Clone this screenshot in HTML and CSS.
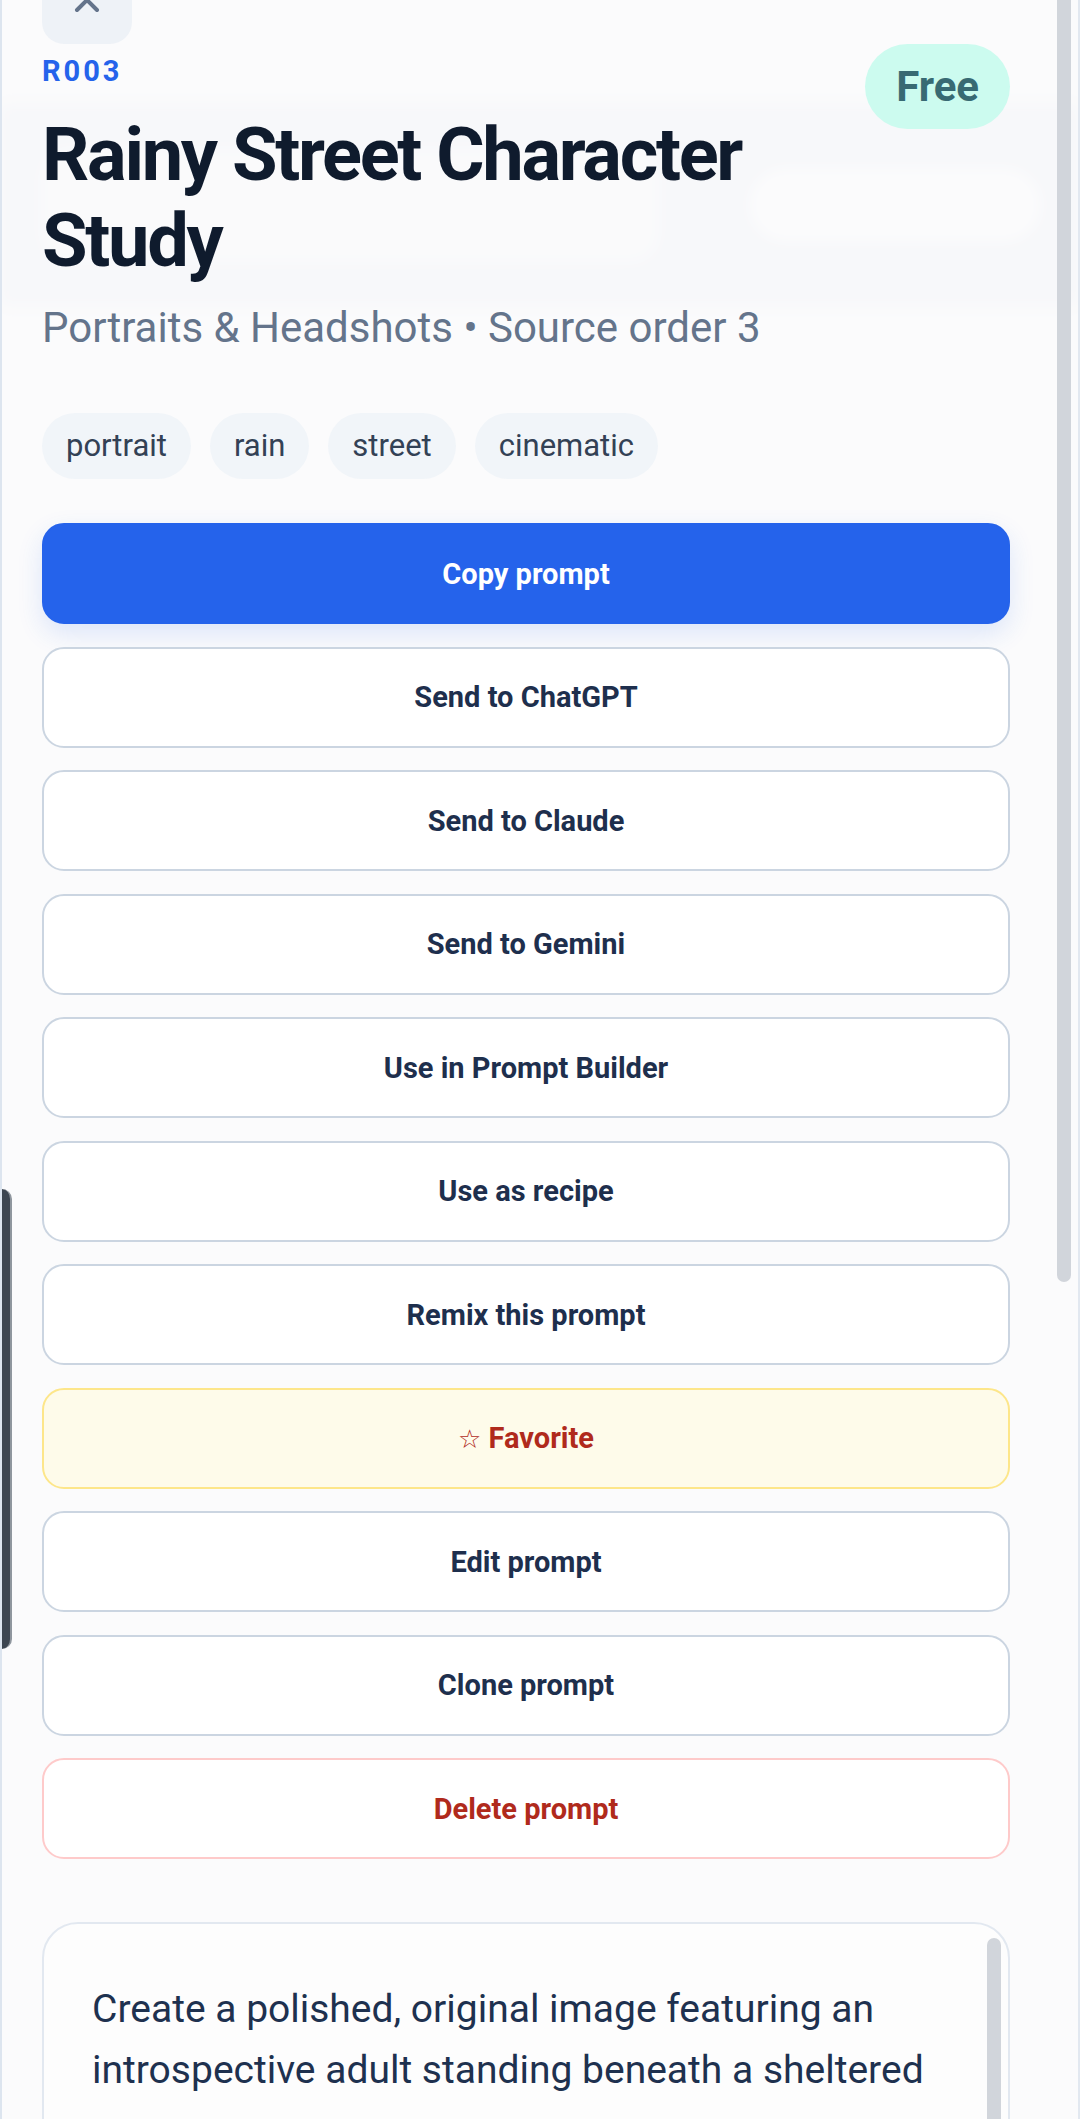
FILE: index.html
```html
<!DOCTYPE html>
<html lang="en">
<head>
    <meta charset="UTF-8" />
    <title>Rainy Street Character Study</title>
    <link rel="stylesheet" href="styles.css">
</head>
<body>
    <!-- page behind the drawer, only seen through it -->
    <div class="backdrop">
        <div class="ghost-header">
            <div class="ghost-logo"></div>
            <div class="ghost-pill"></div>
        </div>
    </div>

    <aside class="drawer">
        <div class="drawer-scroll">
            <button class="close-btn" type="button" aria-label="Close">
                <svg width="28" height="28" viewBox="0 0 28 28">
                    <path d="M4 4 L24 24 M24 4 L4 24" stroke="#64748b" stroke-width="4" stroke-linecap="round" fill="none" />
                </svg>
            </button>

            <header class="detail-head">
                <div class="head-main">
                    <div class="code">R003</div>
                    <h1 class="title">Rainy Street Character Study</h1>
                    <p class="meta">Portraits &amp; Headshots • Source order 3</p>
                </div>
                <span class="badge-free">Free</span>
            </header>

            <ul class="tags">
                <li class="tag">portrait</li>
                <li class="tag">rain</li>
                <li class="tag">street</li>
                <li class="tag">cinematic</li>
            </ul>

            <div class="actions">
                <button class="action-btn primary" type="button">Copy prompt</button>
                <button class="action-btn" type="button">Send to ChatGPT</button>
                <button class="action-btn" type="button">Send to Claude</button>
                <button class="action-btn" type="button">Send to Gemini</button>
                <button class="action-btn" type="button">Use in Prompt Builder</button>
                <button class="action-btn" type="button">Use as recipe</button>
                <button class="action-btn" type="button">Remix this prompt</button>
                <button class="action-btn favorite" type="button"><span class="star">☆</span> Favorite</button>
                <button class="action-btn" type="button">Edit prompt</button>
                <button class="action-btn" type="button">Clone prompt</button>
                <button class="action-btn danger" type="button">Delete prompt</button>
            </div>

            <div class="prompt-box">
                <p class="prompt-text">Create a polished, original image featuring an introspective adult standing beneath a sheltered</p>
                <span class="inner-thumb"></span>
            </div>
        </div>

        <span class="scroll-thumb"></span>
        <span class="side-tab"></span>
    </aside>
</body>
</html>
```

FILE: styles.css
```css
html {
    height: 100%;
}
body {
    margin: 0;
    padding: 0;
    height: 2119px;
    overflow: hidden;
    position: relative;
    background: #fafafa;
    font-family: Roboto, "Liberation Sans", Arial, sans-serif;
}

/* ghost page */
.backdrop {
    height: 100%;
}
.ghost-header {
    display: flex;
    align-items: center;
    gap: 40px;
    height: 200px;
    margin-top: 105px;
    padding: 0 40px;
    background: #dde3ec;
    filter: blur(7px);
}
.ghost-logo {
    width: 620px;
    height: 115px;
    border-radius: 30px;
    background: #f3f5f8;
}
.ghost-pill {
    margin-left: auto;
    width: 290px;
    height: 72px;
    border-radius: 36px;
    background: #fff;
}

/* drawer */
.drawer {
    position: absolute;
    top: 0;
    left: 0;
    right: 0;
    bottom: 0;
    overflow: hidden;
    background: rgba(250, 250, 251, 0.87);
    border-left: 2px solid #dde5ef;
    border-right: 2px solid #e2e8f0;
}
.drawer-scroll {
    margin-top: -44px;
    padding: 0 68px 0 40px;
}

.close-btn {
    display: flex;
    align-items: center;
    justify-content: center;
    width: 90px;
    height: 88px;
    padding: 0;
    border: none;
    border-radius: 22px;
    background: #eef2f7;
}

.detail-head {
    display: flex;
    align-items: flex-start;
    gap: 20px;
}
.head-main {
    flex: 1;
    padding-top: 10px;
}
.code {
    font-size: 29px;
    line-height: 34px;
    font-weight: 700;
    letter-spacing: 3px;
    color: #2563eb;
}
.title {
    margin: 24px 0 0;
    font-size: 74px;
    line-height: 86px;
    font-weight: 700;
    letter-spacing: -2.3px;
    color: #0f1b2d;
}
.meta {
    margin: 18px 0 0;
    font-size: 42px;
    line-height: 52px;
    color: #64748b;
}
.badge-free {
    height: 85px;
    padding: 0 31px;
    border-radius: 43px;
    background: #ccfbef;
    color: #386a73;
    font-size: 42px;
    line-height: 85px;
    font-weight: 700;
}

.tags {
    display: flex;
    gap: 19px;
    margin: 59px 0 0;
    padding: 0;
    list-style: none;
}
.tag {
    height: 66px;
    padding: 0 24px;
    border-radius: 33px;
    background: #f1f5f9;
    color: #334155;
    font-size: 31px;
    line-height: 66px;
}

.actions {
    display: flex;
    flex-direction: column;
    gap: 22.5px;
    margin-top: 44px;
}
.action-btn {
    height: 101px;
    border: 2px solid #cbd5e1;
    border-radius: 22px;
    background: #fff;
    color: #1e2f4d;
    font-family: Roboto, "Liberation Sans", Arial, sans-serif;
    font-size: 29px;
    font-weight: 700;
}
.action-btn.primary {
    border-color: #2563eb;
    background: #2563eb;
    color: #fff;
    box-shadow: 0 10px 26px rgba(37, 99, 235, 0.14);
}
.action-btn.favorite {
    border-color: #fde68a;
    background: #fefbea;
    color: #b02a1c;
}
.star {
    font-family: "DejaVu Sans", sans-serif;
    font-weight: 400;
    font-size: 26px;
}
.action-btn.danger {
    border-color: #fecaca;
    color: #b02a1c;
}

.prompt-box {
    position: relative;
    margin-top: 63px;
    height: 620px;
    padding: 55px 62px 0 48px;
    border: 2px solid #e2e8f0;
    border-radius: 36px;
    background: #fdfdfd;
}
.prompt-text {
    margin: 0;
    font-size: 39px;
    line-height: 61px;
    color: #1e314f;
}
.inner-thumb {
    position: absolute;
    top: 14px;
    right: 7px;
    width: 14px;
    height: 420px;
    border-radius: 7px;
    background: #d1d5db;
}

/* scrollbar and side handle drawn over the drawer */
.scroll-thumb {
    position: absolute;
    top: -20px;
    right: 7px;
    width: 14px;
    height: 1302px;
    border-radius: 7px;
    background: #d1d5db;
}
.side-tab {
    position: absolute;
    top: 1189px;
    left: -2px;
    width: 10px;
    height: 460px;
    border-right: 2px solid #8f969e;
    border-radius: 0 10px 10px 0;
    background: #3d4651;
}
```
